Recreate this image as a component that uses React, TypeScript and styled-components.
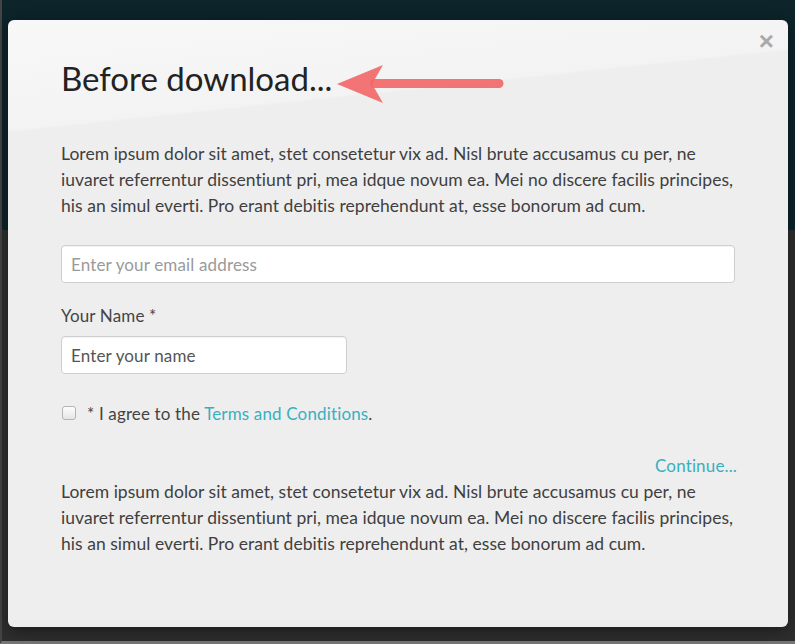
import React, { useState } from 'react';
import styled, { createGlobalStyle } from 'styled-components';

const GlobalStyle = createGlobalStyle`
  html, body {
    margin: 0;
    padding: 0;
    background: #2e2e2e;
  }
  body {
    font-family: Lato, "Open Sans", "Liberation Sans", sans-serif;
  }
  * {
    box-sizing: border-box;
  }
`;

// Page behind the dialog: dark teal hero on top, grey below
const Backdrop = styled.div`
  height: 644px;
  padding: 20px 7px 17px 8px;
  background: linear-gradient(180deg, #0c242a 0px, #0c242a 230px, #2e2e2e 230px);
  border-left: 2px solid #444;
  border-bottom: 3px solid #777;
`;

const Modal = styled.div`
  position: relative;
  height: 607px;
  margin-left: -2px;
  padding: 36px 53px 0 53px;
  border-radius: 6px;
  background: linear-gradient(174deg, #f8f8f8 0%, #f3f3f3 16%, #eeeeee 16.4%, #eeeeee 100%);
  box-shadow: 0 4px 16px rgba(0, 0, 0, 0.4);
`;

const CloseButton = styled.button`
  position: absolute;
  top: 8px;
  right: 14px;
  background: none;
  border: none;
  padding: 0;
  font-family: "Liberation Sans", Arial, sans-serif;
  font-size: 26px;
  font-weight: bold;
  line-height: 26px;
  color: #a9a9a9;
  cursor: pointer;
`;

const Arrow = styled.svg`
  position: absolute;
  left: 325px;
  top: 42px;
`;

const Title = styled.h1`
  margin: 0;
  font-size: 33px;
  font-weight: 400;
  line-height: 44px;
  color: #222;
`;

const Paragraph = styled.p<{ $top?: number }>`
  margin: ${p => p.$top ?? 0}px 0 0 0;
  font-size: 17.5px;
  letter-spacing: 0.04px;
  line-height: 26px;
  color: #3f3f3f;
`;

const Input = styled.input<{ $width?: number; $dark?: boolean }>`
  display: block;
  width: ${p => (p.$width ? `${p.$width}px` : '100%')};
  height: 38px;
  padding: 0 9px;
  border: 1px solid #cfcfcf;
  border-radius: 4px;
  background: #fff;
  box-shadow: inset 0 1px 1px rgba(0, 0, 0, 0.05);
  font-family: inherit;
  font-size: 17px;
  letter-spacing: 0.15px;
  color: #444;

  &::placeholder {
    color: ${p => (p.$dark ? '#555' : '#9a9a9a')};
  }
`;

const EmailInput = styled(Input)`
  margin-top: 26px;
`;

const Label = styled.label`
  display: block;
  margin: 23px 0 10px;
  font-size: 17px;
  letter-spacing: 0.15px;
  line-height: 20px;
  color: #444;
`;

const CheckRow = styled.label`
  display: flex;
  align-items: center;
  gap: 11px;
  margin-top: 29px;
  height: 20px;
  font-size: 17px;
  letter-spacing: 0.15px;
  color: #444;
  cursor: pointer;
`;

const Checkbox = styled.input`
  appearance: none;
  width: 14px;
  height: 14px;
  margin: 0 0 0 1px;
  border: 1px solid #b4b4b4;
  border-radius: 3px;
  background: linear-gradient(#fdfdfd, #e6e6e6);

  &:checked {
    background: #3aafbf;
    border-color: #3aafbf;
  }
`;

const Link = styled.a`
  color: #3aafbf;
  text-decoration: none;
`;

const ContinueRow = styled.div`
  display: flex;
  justify-content: flex-end;
  margin: 30px -2px 0 0;
  font-size: 17px;
  letter-spacing: 0.15px;
  line-height: 26px;
`;

const lorem =
  'Lorem ipsum dolor sit amet, stet consetetur vix ad. Nisl brute accusamus cu per, ne iuvaret referrentur dissentiunt pri, mea idque novum ea. Mei no discere facilis principes, his an simul everti. Pro erant debitis reprehendunt at, esse bonorum ad cum.';

export default function App() {
  const [agreed, setAgreed] = useState(false);

  return (
    <>
      <GlobalStyle />
      <Backdrop>
        <Modal>
          <CloseButton aria-label="Close">×</CloseButton>
          <Arrow width="175" height="46" viewBox="0 0 175 46">
            <line x1="42" y1="21.5" x2="166" y2="21.5" stroke="#f26262" strokeOpacity="0.88" strokeWidth="9" strokeLinecap="round" />
            <path d="M4 22 L50 3 L39 22 L50 41 Z" fill="#f26262" fillOpacity="0.88" />
          </Arrow>

          <Title>Before download...</Title>
          <Paragraph $top={41}>{lorem}</Paragraph>

          <EmailInput type="email" placeholder="Enter your email address" />

          <Label htmlFor="name">Your Name *</Label>
          <Input id="name" $width={286} $dark placeholder="Enter your name" />

          <CheckRow>
            <Checkbox type="checkbox" checked={agreed} onChange={e => setAgreed(e.target.checked)} />
            <span>
              * I agree to the <Link href="#">Terms and Conditions</Link>.
            </span>
          </CheckRow>

          <ContinueRow>
            <Link href="#">Continue...</Link>
          </ContinueRow>
          <Paragraph>{lorem}</Paragraph>
        </Modal>
      </Backdrop>
    </>
  );
}
